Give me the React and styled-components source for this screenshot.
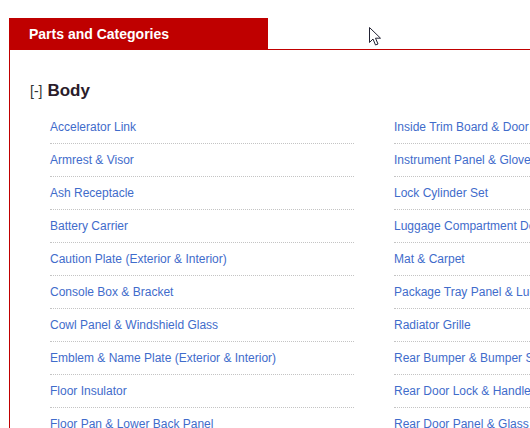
import React from 'react';
import styled, { createGlobalStyle } from 'styled-components';

const GlobalStyle = createGlobalStyle`
  html, body {
    margin: 0;
    padding: 0;
    background: #fff;
    overflow: hidden;
  }
  body {
    font-family: "Liberation Sans", Arial, sans-serif;
  }
`;

const Page = styled.div`
  position: relative;
  width: 530px;
  height: 428px;
  padding: 18px 0 0 9px;
  box-sizing: border-box;
  overflow: hidden;
`;

const Panel = styled.section`
  border-left: 1px solid #c00000;
  width: 900px;
`;

const Header = styled.div`
  display: flex;
  border-bottom: 1px solid #c00000;
`;

const Tab = styled.h2`
  margin: 0;
  width: 258px;
  height: 31px;
  box-sizing: border-box;
  padding-left: 19px;
  background: #bf0000;
  color: #fff;
  font-size: 14px;
  font-weight: bold;
  line-height: 32px;
`;

const Content = styled.div`
  padding: 31px 0 0 20px;
`;

const Heading = styled.h3`
  margin: 0 0 10px;
  height: 20px;
  display: flex;
  align-items: center;
  gap: 5px;
  color: #2b1d2b;
`;

const Toggle = styled.span`
  font-size: 14px;
  font-weight: normal;
  color: #333;
`;

const Title = styled.span`
  font-size: 17px;
  font-weight: bold;
`;

const Columns = styled.div`
  display: flex;
  gap: 40px;
  padding-left: 20px;
`;

const List = styled.ul`
  list-style: none;
  margin: 0;
  padding: 0;
  width: 304px;
  flex-shrink: 0;
`;

const Item = styled.li`
  padding: 9px 0;
  font-size: 12px;
  line-height: 14px;
  border-bottom: 1px dotted #c4c4c4;
  white-space: nowrap;
`;

const Link = styled.a`
  font-size: 12px;
  color: #3f6ccb;
  text-decoration: none;
`;

const Cursor = styled.svg`
  position: absolute;
  left: 369px;
  top: 27px;
`;

const left = [
  'Accelerator Link',
  'Armrest & Visor',
  'Ash Receptacle',
  'Battery Carrier',
  'Caution Plate (Exterior & Interior)',
  'Console Box & Bracket',
  'Cowl Panel & Windshield Glass',
  'Emblem & Name Plate (Exterior & Interior)',
  'Floor Insulator',
  'Floor Pan & Lower Back Panel',
];

const right = [
  'Inside Trim Board & Door Trim',
  'Instrument Panel & Glove Compartment',
  'Lock Cylinder Set',
  'Luggage Compartment Door & Lock',
  'Mat & Carpet',
  'Package Tray Panel & Luggage Compartment',
  'Radiator Grille',
  'Rear Bumper & Bumper Stay',
  'Rear Door Lock & Handle',
  'Rear Door Panel & Glass',
];

export default function App() {
  return (
    <>
      <GlobalStyle />
      <Page>
        <Panel>
          <Header>
            <Tab>Parts and Categories</Tab>
          </Header>
          <Content>
            <Heading>
              <Toggle>[-]</Toggle>
              <Title>Body</Title>
            </Heading>
            <Columns>
              {[left, right].map((col, i) => (
                <List key={i}>
                  {col.map((name) => (
                    <Item key={name}>
                      <Link href="#">{name}</Link>
                    </Item>
                  ))}
                </List>
              ))}
            </Columns>
          </Content>
        </Panel>
        <Cursor width="13" height="20" viewBox="0 0 13 20">
          <path
            d="M0.5 0.5 L0.5 15.5 L4 12 L6.5 18 L9 17 L6.5 11.2 L11.5 11.2 Z"
            fill="#fff"
            stroke="#222233"
            strokeWidth="1"
            strokeLinejoin="miter"
          />
        </Cursor>
      </Page>
    </>
  );
}
